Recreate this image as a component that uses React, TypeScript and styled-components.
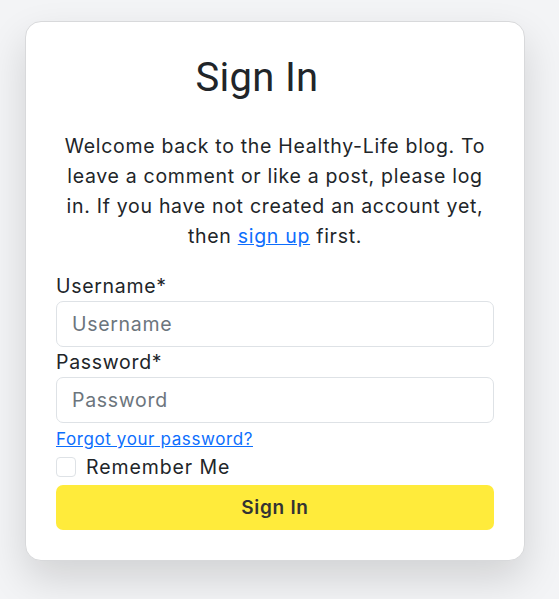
import styled, { createGlobalStyle } from "styled-components";

const GlobalStyle = createGlobalStyle`
	* {
		box-sizing: border-box;
	}
	body {
		margin: 0;
		background: #f3f4f6;
		font-family: Inter, "Noto Sans", sans-serif;
		letter-spacing: 0.7px;
		color: #212529;
	}
`;

export default function App() {
	return (
		<Page>
			<GlobalStyle/>
			<Card>
				<Title>Sign In</Title>
				<Lead>
					Welcome back to the Healthy-Life blog. To leave a comment or like a post,
					please log in. If you have not created an account yet,
					then <Link href="#">sign up</Link> first.
				</Lead>
				<Form onSubmit={(e) => e.preventDefault()}>
					<Label htmlFor="id_login">Username*</Label>
					<Input id="id_login" type="text" placeholder="Username"/>
					<Label htmlFor="id_password">Password*</Label>
					<Input id="id_password" type="password" placeholder="Password"/>
					<SmallLink href="#">Forgot your password?</SmallLink>
					<CheckRow>
						<Checkbox type="checkbox" id="id_remember"/>
						<label htmlFor="id_remember">Remember Me</label>
					</CheckRow>
					<SubmitButton type="submit">Sign In</SubmitButton>
				</Form>
			</Card>
		</Page>
	);
}

const Page = styled.div`
	min-height: 599px;
	padding: 21px 35px 39px 25px;
`;

const Card = styled.div`
	width: 500px;
	background: #fff;
	border: 1px solid #d8d9db;
	border-radius: 16px;
	box-shadow: 0 18px 40px rgba(0, 0, 0, 0.14);
	padding: 32px 30px 30px;
`;

const Title = styled.h1`
	margin: 0 0 29px;
	padding-right: 36px;
	font-family: Roboto, "Liberation Sans", sans-serif;
	font-weight: 400;
	font-size: 40px;
	line-height: 48px;
	letter-spacing: 0.3px;
	text-align: center;
`;

const Lead = styled.p`
	margin: 0 0 20px;
	font-size: 19.5px;
	line-height: 30px;
	text-align: center;
`;

const Link = styled.a`
	color: #0d6efd;
	text-decoration: underline;
`;

const Form = styled.form`
	display: flex;
	flex-direction: column;
`;

const Label = styled.label`
	font-size: 19.5px;
	line-height: 30px;
`;

const Input = styled.input`
	height: 46px;
	padding: 0 15px;
	font: inherit;
	font-size: 19.5px;
	letter-spacing: 0.7px;
	color: #212529;
	border: 1px solid #dee2e6;
	border-radius: 7px;
	&::placeholder {
		color: #6c757d;
	}
`;

const SmallLink = styled.a`
	margin-top: 4px;
	font-size: 17px;
	line-height: 25px;
	letter-spacing: 0.6px;
	color: #0d6efd;
	text-decoration: underline;
	align-self: flex-start;
`;

const CheckRow = styled.div`
	display: flex;
	align-items: center;
	gap: 10px;
	font-size: 19.5px;
	line-height: 30px;
	letter-spacing: 0.9px;
`;

const Checkbox = styled.input`
	appearance: none;
	margin: 0;
	width: 20px;
	height: 20px;
	border: 1px solid #dee2e6;
	border-radius: 4px;
	background: #fff;
`;

const SubmitButton = styled.button`
	margin-top: 3px;
	height: 45px;
	border: none;
	border-radius: 7px;
	background: #ffeb3b;
	color: #333;
	font-family: inherit;
	font-size: 19px;
	font-weight: 600;
	letter-spacing: 0.7px;
	cursor: pointer;
`;
